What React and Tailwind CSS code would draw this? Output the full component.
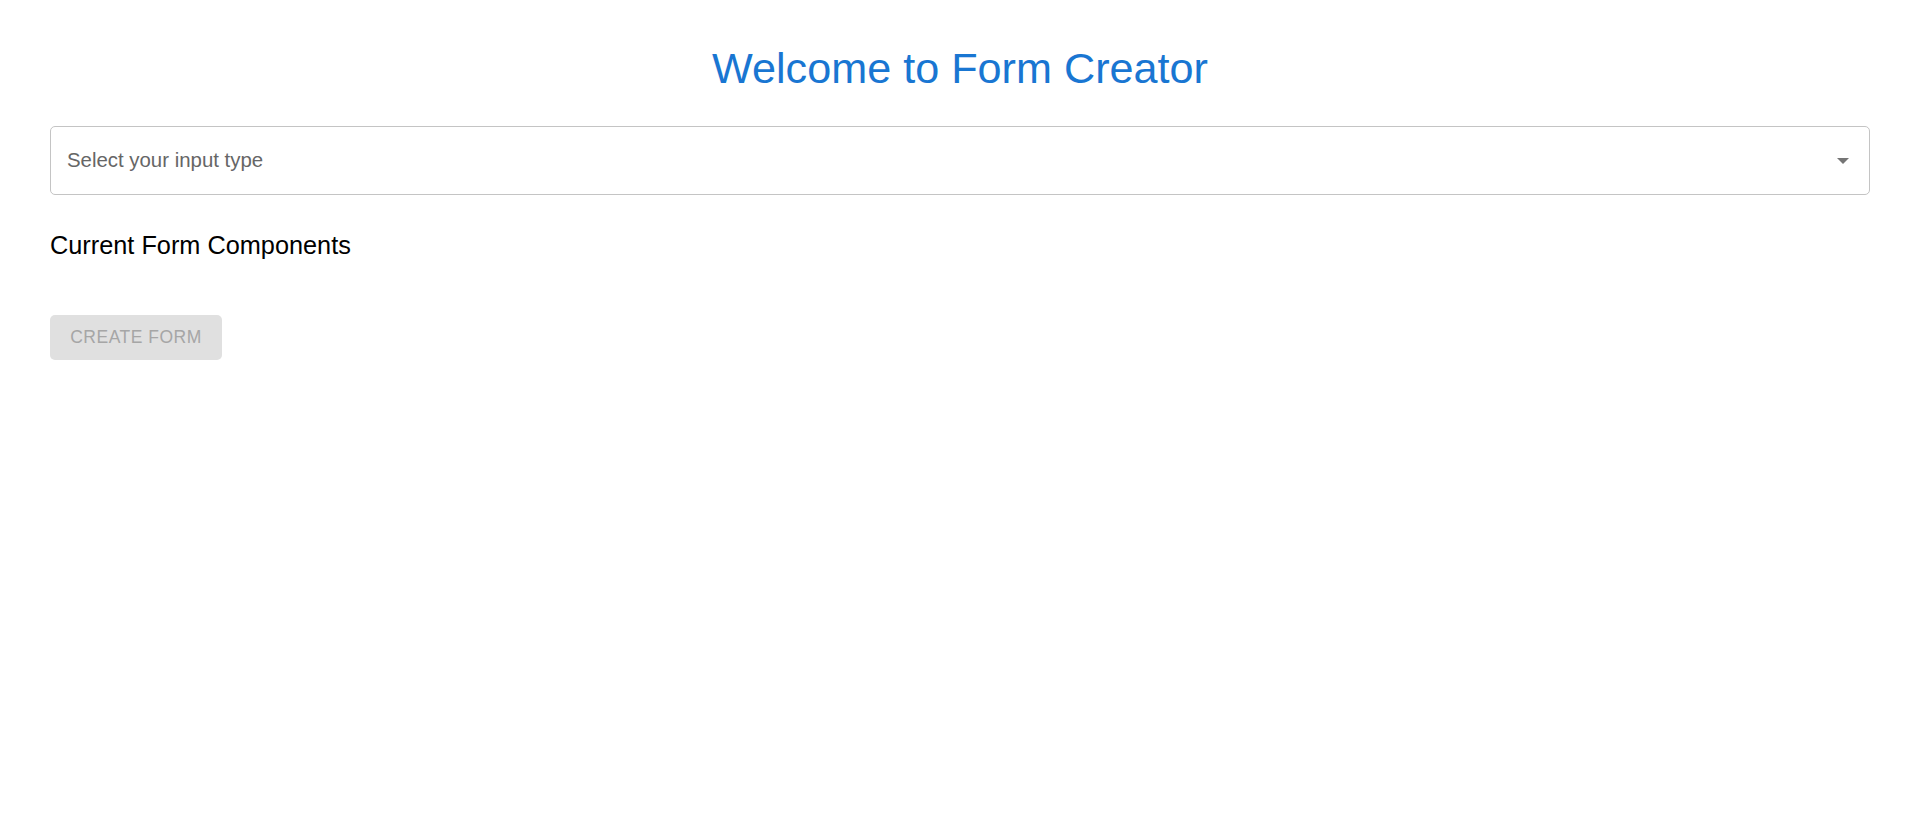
function App() {
  return (
    <div
      className="min-h-screen bg-white pl-[50px] pr-[46px] pt-[42px]"
      style={{ fontFamily: '"Liberation Sans", Arial, sans-serif' }}
    >
      <h1 className="text-center text-[43.2px] leading-[52px] text-[#1976d2]">
        Welcome to Form Creator
      </h1>

      <div className="mt-[32px] flex h-[69px] items-center justify-between rounded-[5px] border border-[#c4c4c4] pl-[16px] pr-[20px]">
        <span className="text-[20.4px] leading-[25px] text-[#666666]">
          Select your input type
        </span>
        <svg width="12" height="6" viewBox="0 0 12 6" className="mt-[1px]">
          <path d="M0 0h12L6 6z" fill="#757575" />
        </svg>
      </div>

      <h2 className="mt-[35px] text-[25.3px] leading-[30px] text-black">
        Current Form Components
      </h2>

      <button
        type="button"
        disabled
        className="mt-[55px] h-[45px] w-[172px] rounded-[5px] bg-[#e0e0e0] text-[17.5px] uppercase tracking-[0.5px] text-[#a6a6a6]"
      >
        Create Form
      </button>
    </div>
  );
}

export default App;
